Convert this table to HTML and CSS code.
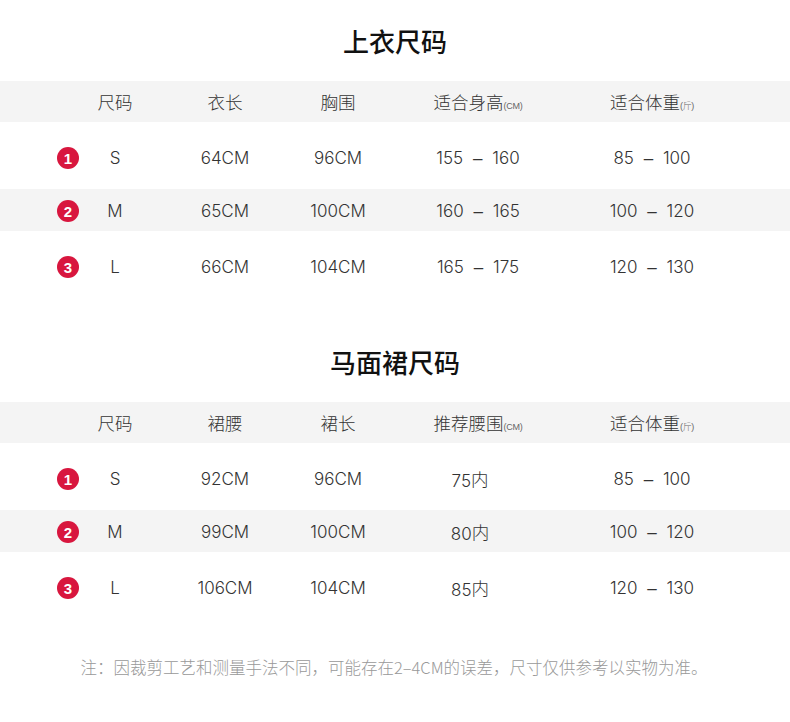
FILE: index.html
```html
<!DOCTYPE html>
<html lang="zh">
<head>
<meta charset="utf-8">
<title>尺码表</title>
<link rel="stylesheet" href="styles.css">
</head>
<body>
<main class="page">
  <section class="chart">
    <h2 class="title">上衣尺码</h2>
    <div class="row head">
      <span></span><span class="cn">尺码</span><span class="cn">衣长</span><span class="cn">胸围</span>
      <span class="cn">适合身高<small>(CM)</small></span><span class="cn">适合体重<small>(斤)</small></span>
    </div>
    <div class="row tall first">
      <span class="badge">1</span><span>S</span><span>64CM</span><span>96CM</span><span class="rng">155 <span class="dash">–</span> 160</span><span class="rng">85 <span class="dash">–</span> 100</span>
    </div>
    <div class="row alt">
      <span class="badge">2</span><span>M</span><span>65CM</span><span>100CM</span><span class="rng">160 <span class="dash">–</span> 165</span><span class="rng">100 <span class="dash">–</span> 120</span>
    </div>
    <div class="row tall last">
      <span class="badge">3</span><span>L</span><span>66CM</span><span>104CM</span><span class="rng">165 <span class="dash">–</span> 175</span><span class="rng">120 <span class="dash">–</span> 130</span>
    </div>
  </section>

  <section class="chart second">
    <h2 class="title">马面裙尺码</h2>
    <div class="row head">
      <span></span><span class="cn">尺码</span><span class="cn">裙腰</span><span class="cn">裙长</span>
      <span class="cn">推荐腰围<small>(CM)</small></span><span class="cn">适合体重<small>(斤)</small></span>
    </div>
    <div class="row tall first">
      <span class="badge">1</span><span>S</span><span>92CM</span><span>96CM</span><span class="waist">75<span class="nei">内</span></span><span class="rng">85 <span class="dash">–</span> 100</span>
    </div>
    <div class="row alt">
      <span class="badge">2</span><span>M</span><span>99CM</span><span>100CM</span><span class="waist">80<span class="nei">内</span></span><span class="rng">100 <span class="dash">–</span> 120</span>
    </div>
    <div class="row tall last">
      <span class="badge">3</span><span>L</span><span>106CM</span><span>104CM</span><span class="waist">85<span class="nei">内</span></span><span class="rng">120 <span class="dash">–</span> 130</span>
    </div>
  </section>

  <p class="note">注：因裁剪工艺和测量手法不同，可能存在2–4CM的误差，尺寸仅供参考以实物为准。</p>
</main>
</body>
</html>
```

FILE: styles.css
```css
* { box-sizing: border-box; }

html, body {
  margin: 0;
  padding: 0;
  background: #ffffff;
}

.page {
  width: 790px;
  font-family: Inter, "Liberation Sans", "Noto Sans CJK SC", sans-serif;
  font-weight: 300;
  color: #333333;
}

.chart.second {
  margin-top: 18px;
}

.title {
  margin: 0;
  height: 81px;
  display: flex;
  align-items: center;
  justify-content: center;
  font-family: "Noto Sans CJK SC", sans-serif;
  font-size: 26px;
  font-weight: 500;
  color: #111111;
}

.row {
  display: grid;
  grid-template-columns: 40px 54px 166px 60px 220px 128px;
  padding-left: 48px;
  align-items: center;
  justify-items: center;
  font-size: 17px;
  white-space: nowrap;
}

.row > span {
  justify-self: center;
}

.rng {
  word-spacing: 5px;
}

.dash {
  font-family: "Liberation Sans", sans-serif;
  font-weight: normal;
}

.head {
  height: 41px;
  background: #f4f4f4;
  padding-bottom: 1px;
}

.cn {
  font-family: "Noto Sans CJK SC", sans-serif;
  font-weight: 300;
  font-size: 17.5px;
  color: #333333;
}

.cn small {
  font-family: "Liberation Sans", "Noto Sans CJK SC", sans-serif;
  font-size: 9px;
  color: #666666;
  letter-spacing: -0.3px;
}

.tall {
  height: 67px;
  padding-top: 5px;
}

.tall.last {
  height: 72px;
  padding-top: 0;
}

.alt {
  height: 42px;
  background: #f4f4f4;
  padding-top: 2px;
}

.waist {
  padding-right: 16px;
}

.nei {
  font-family: "Noto Sans CJK SC", sans-serif;
  font-weight: 300;
  font-size: 17.5px;
  position: relative;
  top: -1px;
}

.badge {
  width: 22px;
  height: 22px;
  border-radius: 50%;
  background: #d8163e;
  color: #ffffff;
  font-family: "Liberation Sans", sans-serif;
  font-size: 15px;
  font-weight: bold;
  display: flex;
  align-items: center;
  justify-content: center;
  line-height: 1;
}

.note {
  margin: 31px 0 0;
  text-align: center;
  font-family: "Noto Sans CJK SC", sans-serif;
  font-weight: 300;
  font-size: 16.5px;
  line-height: 24px;
  color: #999999;
  padding-right: 2px;
}
```
